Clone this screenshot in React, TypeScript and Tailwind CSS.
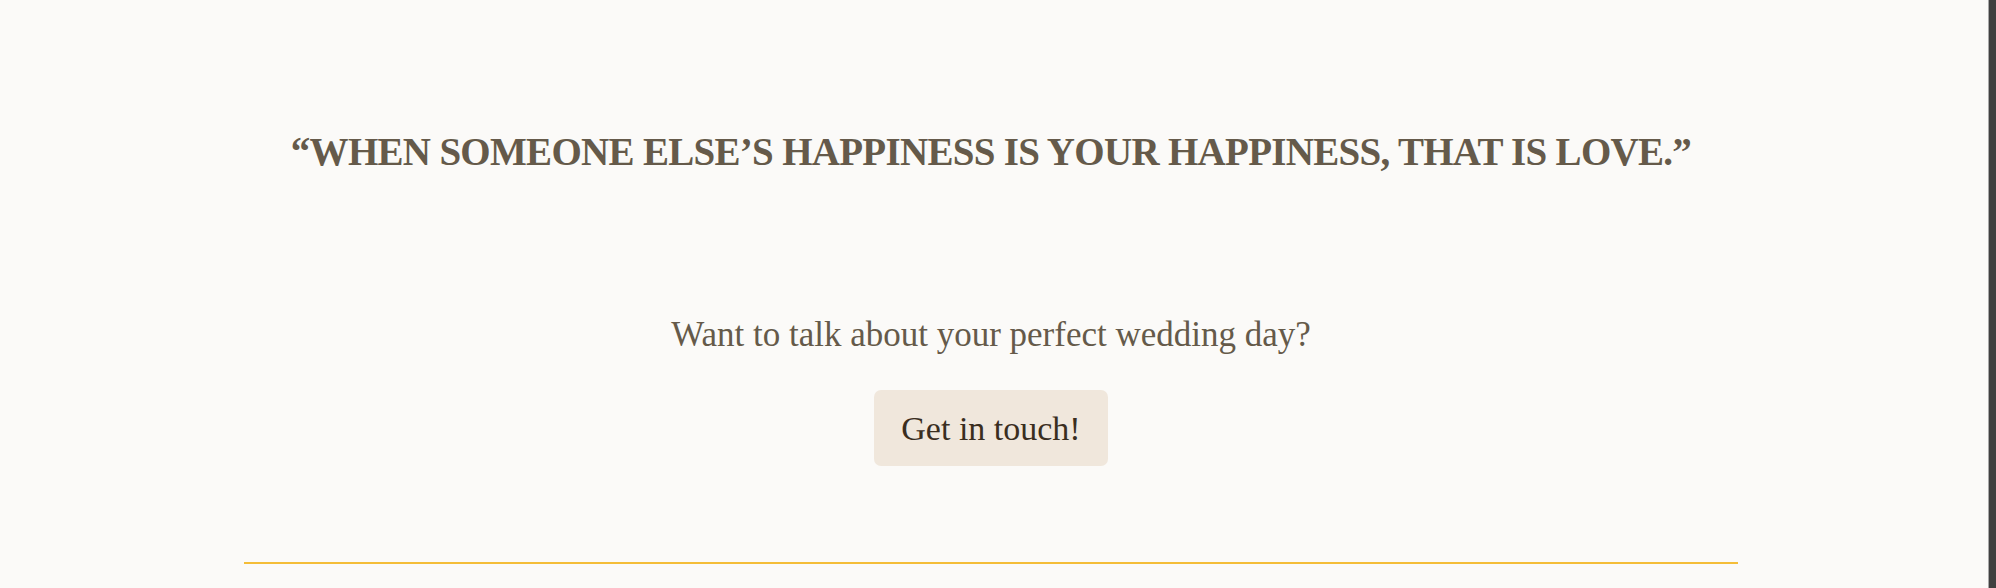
export default function App() {
    return (
        <div className="flex h-[588px] w-full overflow-hidden bg-[#fbfaf8]">
            <main className="flex-1">
                <section className="ml-[244px] flex w-[1494px] flex-col items-center font-['Liberation_Serif',serif] text-[#655a4a]">
                    <h2 className="mt-[132px] text-[39px] font-bold uppercase leading-none tracking-[-0.7px] whitespace-nowrap">
                        “When someone else’s happiness is your happiness, that is love.”
                    </h2>

                    <p className="mt-[146px] text-[35px] leading-none">Want to talk about your perfect wedding day?</p>

                    <a
                        href="#contact"
                        className="mt-[38px] rounded-[7px] bg-[#f0e7dc] px-[27px] pt-[22px] pb-[20px] text-[34px] leading-none text-[#3a2e1f]"
                    >
                        Get in touch!
                    </a>

                    <div className="mt-[96px] h-[2px] w-full bg-[#f4bd38]"></div>
                </section>
            </main>

            {/* scrollbar strip */}
            <div className="w-[8px] border-l border-[#a8a8a8] bg-[#404040]"></div>
        </div>
    )
}
